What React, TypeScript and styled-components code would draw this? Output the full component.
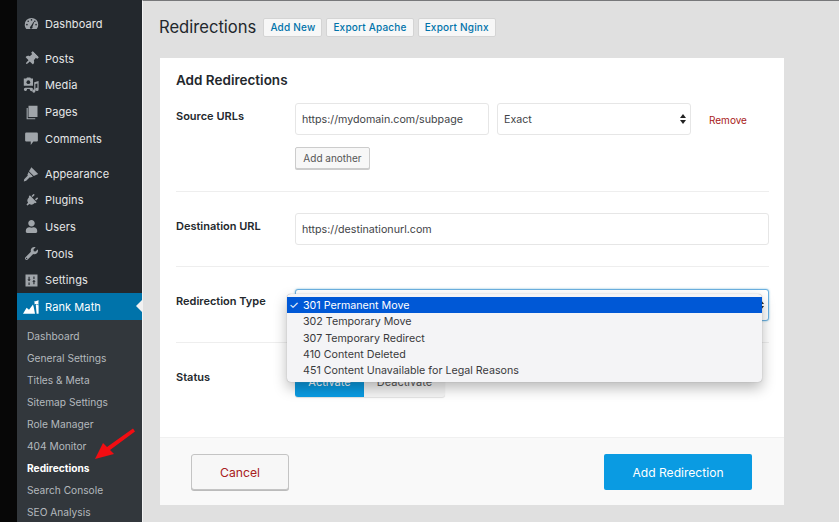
import React from "react";
import styled, { createGlobalStyle } from "styled-components";
import { FaPlug, FaThumbtack, FaUser, FaWrench } from "react-icons/fa";

const GlobalStyle = createGlobalStyle`
  html, body {
    margin: 0;
    padding: 0;
    height: 100%;
    overflow: hidden;
    font-family: Inter, "Liberation Sans", sans-serif;
  }
`;

const DashboardIcon = () => (
  <svg viewBox="0 0 20 20" width="15" height="15" fill="currentColor">
    <path d="M10 2.500a9 9 0 0 0-9 9c0 2.200.8 4.200 2.100 5.700h13.800A8.900 8.900 0 0 0 19 11.500a9 9 0 0 0-9-9z" />
    <g fill="#23282d">
      <circle cx="10" cy="5.200" r="1.100" />
      <circle cx="5.600" cy="7" r="1.100" />
      <circle cx="14.400" cy="7" r="1.100" />
      <circle cx="3.900" cy="11.500" r="1.100" />
      <circle cx="16.100" cy="11.500" r="1.100" />
      <path d="M9 13.500 12.800 7.600l.8.500-2.400 6.200a1.800 1.800 0 1 1-2.200-.8z" />
    </g>
  </svg>
);

const MediaIcon = () => (
  <svg viewBox="0 0 20 20" width="16" height="16" fill="currentColor">
    <path d="M1 2h3l1-1.500h4L10 2h2.500v9H1z" />
    <circle cx="6.700" cy="6.500" r="2.300" fill="#23282d" />
    <path d="M14 6.500 19.500 5v10.500a2 2 0 1 1-1.500-1.900V8l-2.500.7v8.800a2 2 0 1 1-1.500-1.900z" />
    <path d="M3 13.500h7.500a2 2 0 1 1-1.500 3.500 2 2 0 0 1-.5-2H5a2 2 0 1 1-2-1.500z" />
  </svg>
);

const PagesIcon = () => (
  <svg viewBox="0 0 20 20" width="15" height="15" fill="currentColor">
    <path d="M6 1h12v15H6z" />
    <path d="M3.500 4H5v13.500h10V19H3.500z" />
  </svg>
);

const CommentsIcon = () => (
  <svg viewBox="0 0 20 20" width="15" height="15" fill="currentColor">
    <path d="M3 2h14a1.500 1.500 0 0 1 1.500 1.500v9A1.500 1.500 0 0 1 17 14h-4.500L9 18.500V14H3a1.500 1.500 0 0 1-1.500-1.500v-9A1.500 1.500 0 0 1 3 2z" />
  </svg>
);

const AppearanceIcon = () => (
  <svg viewBox="0 0 20 20" width="16" height="16" fill="currentColor">
    <path d="M10.500 1.500 19 10l-5.500 2.500L7.500 6.500z" />
    <path d="M7 7.500 12.500 13l-3 1.500-1-.5L4 18.500 1 19.500 1.500 16.500 6 12l-.5-1z" />
  </svg>
);

const SettingsIcon = () => (
  <svg viewBox="0 0 20 20" width="15" height="15" fill="currentColor">
    <path d="M2 2h16v16H2z" />
    <g fill="#23282d">
      <path d="M6 5h1.500v3.500H9l-2.250 2.500L4.500 8.500H6z" />
      <path d="M6 12.500h1.500V16H6z" />
      <path d="M12.500 11.500H11L13.250 9l2.250 2.500H14V15h-1.500z" />
      <path d="M12.500 4.500H14V8h-1.500z" />
    </g>
  </svg>
);

const RankMathIcon = () => (
  <svg viewBox="0 0 20 20" width="16" height="16" fill="currentColor">
    <path d="M0 18.500 4.500 11l3 2.500L12.500 7l1 3.500L15 18.500z" />
    <path d="M13.500 6.500 15 5l-1.500-1.500L19.500 1.500 19 8l-1.500-1.800L16 7.500l1 11h2.500V6z" />
  </svg>
);

const menuGroups = [
  [{ label: "Dashboard", icon: <DashboardIcon /> }],
  [
    { label: "Posts", icon: <FaThumbtack size={14} style={{ transform: "rotate(45deg)" }} /> },
    { label: "Media", icon: <MediaIcon /> },
    { label: "Pages", icon: <PagesIcon /> },
    { label: "Comments", icon: <CommentsIcon /> },
  ],
  [
    { label: "Appearance", icon: <AppearanceIcon /> },
    { label: "Plugins", icon: <FaPlug size={13} style={{ transform: "rotate(45deg)" }} /> },
    { label: "Users", icon: <FaUser size={13} /> },
    { label: "Tools", icon: <FaWrench size={13} /> },
    { label: "Settings", icon: <SettingsIcon /> },
  ],
];

const subItems = [
  "Dashboard",
  "General Settings",
  "Titles & Meta",
  "Sitemap Settings",
  "Role Manager",
  "404 Monitor",
  "Redirections",
  "Search Console",
  "SEO Analysis",
];

const redirectOptions = [
  "301 Permanent Move",
  "302 Temporary Move",
  "307 Temporary Redirect",
  "410 Content Deleted",
  "451 Content Unavailable for Legal Reasons",
];

export default function App() {
  return (
    <Page>
      <GlobalStyle />
      <Rail />
      <Sidebar>
        {menuGroups.map((group) => (
          <MenuGroup key={group[0].label}>
            {group.map((item) => (
              <MenuItem key={item.label}>
                <IconSlot>{item.icon}</IconSlot>
                {item.label}
              </MenuItem>
            ))}
          </MenuGroup>
        ))}
        <ActiveItem>
          <IconSlot>
            <RankMathIcon />
          </IconSlot>
          Rank Math
        </ActiveItem>
        <SubMenu>
          {subItems.map((item) => (
            <SubItem key={item} $current={item === "Redirections"}>
              {item}
            </SubItem>
          ))}
        </SubMenu>
        <PointerArrow viewBox="0 0 44 34" width="44" height="34">
          <path d="M2 32 10 16l4 4L40 1.500 42 4.500 17 23l4 4z" fill="#f20d12" />
        </PointerArrow>
      </Sidebar>
      <Main>
        <Header>
          <Title>Redirections</Title>
          <HeaderButton>Add New</HeaderButton>
          <HeaderButton>Export Apache</HeaderButton>
          <HeaderButton>Export Nginx</HeaderButton>
        </Header>
        <Card>
          <CardBody>
            <Heading>Add Redirections</Heading>
            <Section $first>
              <Label $low>Source URLs</Label>
              <div>
                <SourceRow>
                  <Field $width="194px">https://mydomain.com/subpage</Field>
                  <Field $width="194px">
                    Exact
                    <SelectArrows />
                  </Field>
                  <RemoveLink>Remove</RemoveLink>
                </SourceRow>
                <AddAnother>Add another</AddAnother>
              </div>
            </Section>
            <Section>
              <Label $low>Destination URL</Label>
              <Field>https://destinationurl.com</Field>
            </Section>
            <Section>
              <Label>Redirection Type</Label>
              <SelectHolder>
                <Field $focused>
                  <SelectArrows />
                </Field>
                <Dropdown>
                  {redirectOptions.map((option, i) => (
                    <DropdownOption key={option} $selected={i === 0}>
                      {i === 0 && <Check>✓</Check>}
                      {option}
                    </DropdownOption>
                  ))}
                </Dropdown>
              </SelectHolder>
            </Section>
            <StatusSection>
              <Label>Status</Label>
              <Toggle>
                <ToggleButton $on>Activate</ToggleButton>
                <ToggleButton>Deactivate</ToggleButton>
              </Toggle>
            </StatusSection>
          </CardBody>
          <Footer>
            <CancelButton>Cancel</CancelButton>
            <SubmitButton>Add Redirection</SubmitButton>
          </Footer>
        </Card>
      </Main>
    </Page>
  );
}

const Page = styled.div`
  display: flex;
  height: 522px;
  width: 839px;
  overflow: hidden;
  background: #e0e0e0;
`;

const Rail = styled.div`
  width: 17px;
  flex-shrink: 0;
  background: #070707;
`;

const Sidebar = styled.nav`
  position: relative;
  width: 125px;
  flex-shrink: 0;
  padding-top: 10px;
  background: #23282d;
  box-sizing: border-box;
`;

const MenuGroup = styled.div`
  & + & {
    margin-top: 8.500px;
  }
`;

const MenuItem = styled.div`
  display: flex;
  align-items: center;
  height: 26.600px;
  padding-top: 1px;
  box-sizing: border-box;
  color: #e6e7e8;
  font-size: 11px;
  letter-spacing: 0.1px;
`;

const IconSlot = styled.span`
  display: flex;
  justify-content: center;
  align-items: center;
  width: 28px;
  color: #a0a5aa;
`;

const ActiveItem = styled(MenuItem)`
  position: relative;
  height: 27px;
  color: #fff;
  background: #0073aa;
  ${IconSlot} {
    color: #fff;
  }
  &::after {
    content: "";
    position: absolute;
    right: 0;
    top: 50%;
    margin-top: -6px;
    border: 6px solid transparent;
    border-left-width: 0;
    border-right-color: #f1f1f1;
  }
`;

const SubMenu = styled.div`
  padding-top: 5.500px;
  height: 202px;
  box-sizing: border-box;
  background: #32373c;
`;

const SubItem = styled.div<{ $current?: boolean }>`
  height: 22px;
  line-height: 22px;
  padding-left: 10px;
  font-size: 10.200px;
  color: ${({ $current }) => ($current ? "#fff" : "#b4b9be")};
  font-weight: ${({ $current }) => ($current ? 700 : 400)};
`;

const PointerArrow = styled.svg`
  position: absolute;
  left: 76px;
  top: 427px;
`;

const Main = styled.main`
  flex: 1;
  min-width: 0;
  border-top: 1px solid #77787a;
  border-left: 1px solid #f2f2f2;
  padding-left: 16px;
  box-sizing: border-box;
`;

const Header = styled.header`
  display: flex;
  align-items: center;
  gap: 4px;
  height: 18px;
  margin-top: 17px;
`;

const Title = styled.h1`
  margin: 0 3px 0 0;
  font-size: 16.600px;
  font-weight: 400;
  color: #23282d;
  white-space: nowrap;
`;

const HeaderButton = styled.button`
  height: 19px;
  padding: 0 6px;
  border: 1px solid #d4d4d4;
  border-radius: 2px;
  background: #f7f7f7;
  color: #0073aa;
  font: 500 10px Inter, "Liberation Sans", sans-serif;
  letter-spacing: 0.2px;
  white-space: nowrap;
`;

const Card = styled.section`
  width: 624px;
  margin: 22px 0 0 1px;
  background: #fff;
`;

const CardBody = styled.div`
  padding: 0 15px 0 16px;
  height: 379px;
  box-sizing: border-box;
`;

const Heading = styled.h2`
  margin: 0 0 14px;
  padding-top: 14px;
  font-size: 13.500px;
  line-height: 17px;
  font-weight: 600;
  color: #23282d;
`;

const Section = styled.div<{ $first?: boolean }>`
  display: grid;
  grid-template-columns: 119px 1fr;
  padding-bottom: ${({ $first }) => ($first ? "22px" : "21px")};
  margin-bottom: ${({ $first }) => ($first ? "21px" : "22px")};
  border-bottom: 1px solid #eeeeee;
`;

const StatusSection = styled(Section)`
  border-bottom: none;
  margin-bottom: 0;
`;

const Label = styled.div<{ $low?: boolean }>`
  padding-top: ${({ $low }) => ($low ? "5px" : "4px")};
  font-size: 11px;
  line-height: 16px;
  font-weight: 600;
  color: #23282d;
`;

const SourceRow = styled.div`
  display: flex;
  align-items: center;
  gap: 8px;
`;

const Field = styled.div<{ $width?: string; $focused?: boolean }>`
  position: relative;
  display: flex;
  align-items: center;
  width: ${({ $width }) => $width || "100%"};
  height: 32px;
  padding: 0 6px;
  border: 1px solid ${({ $focused }) => ($focused ? "#6bb0e0" : "#e6e6e6")};
  border-radius: 3px;
  box-sizing: border-box;
  background: #fff;
  color: #3f4448;
  font-size: 10.700px;
  white-space: nowrap;
  box-shadow: ${({ $focused }) => ($focused ? "0 0 2px rgba(30, 140, 190, 0.6)" : "none")};
`;

const SelectArrows = styled.span`
  position: absolute;
  right: 3px;
  top: 50%;
  margin-top: -5px;
  width: 7px;
  height: 10px;
  &::before,
  &::after {
    content: "";
    position: absolute;
    left: 0;
    border-left: 3px solid transparent;
    border-right: 3px solid transparent;
  }
  &::before {
    top: 0;
    border-bottom: 4px solid #222;
  }
  &::after {
    bottom: 0;
    border-top: 4px solid #222;
  }
`;

const RemoveLink = styled.span`
  margin-left: 10px;
  padding-top: 2px;
  color: #a82020;
  font-size: 10px;
`;

const AddAnother = styled.button`
  display: block;
  height: 22px;
  width: 75px;
  margin-top: 12px;
  padding: 0;
  border: 1px solid #cccccc;
  border-radius: 2px;
  background: #f7f7f7;
  box-shadow: 0 1px 0 #ccc;
  color: #555;
  font: 400 10px Inter, "Liberation Sans", sans-serif;
`;

const SelectHolder = styled.div`
  position: relative;
`;

const Dropdown = styled.div`
  position: absolute;
  top: 5px;
  left: -8px;
  right: 7px;
  padding: 3px 0 4px;
  border-radius: 4px;
  background: #f4f4f6;
  box-shadow: 0 0 1px #8a8a8a, 0 6px 14px rgba(0, 0, 0, 0.28);
  z-index: 2;
`;

const DropdownOption = styled.div<{ $selected?: boolean }>`
  position: relative;
  height: 16.300px;
  line-height: 17.500px;
  padding-left: 16px;
  font-size: 10.700px;
  color: ${({ $selected }) => ($selected ? "#fff" : "#3a3a3c")};
  background: ${({ $selected }) => ($selected ? "#0058d6" : "transparent")};
`;

const Check = styled.span`
  position: absolute;
  left: 2px;
  font-size: 11px;
`;

const Toggle = styled.div`
  display: flex;
`;

const ToggleButton = styled.div<{ $on?: boolean }>`
  display: flex;
  align-items: center;
  justify-content: center;
  height: 32px;
  width: ${({ $on }) => ($on ? "69px" : "81px")};
  padding-top: 1px;
  box-sizing: border-box;
  border-radius: ${({ $on }) => ($on ? "3px 0 0 3px" : "0 3px 3px 0")};
  background: ${({ $on }) => ($on ? "#0a9be2" : "#f5f5f5")};
  color: ${({ $on }) => ($on ? "#fff" : "#555")};
  box-shadow: 0 1px 1px rgba(0, 0, 0, 0.12);
  font-size: 11px;
`;

const Footer = styled.footer`
  display: flex;
  justify-content: space-between;
  align-items: flex-start;
  height: 68px;
  padding: 16px 32px 0 31px;
  box-sizing: border-box;
  background: #f9f9f9;
  border-top: 1px solid #f0f0f0;
`;

const CancelButton = styled.button`
  width: 98px;
  height: 36px;
  border: 1px solid #c4c4c4;
  border-radius: 3px;
  background: #f7f7f7;
  box-shadow: 0 1px 0 #bbb;
  color: #a82020;
  font: 400 12.200px Inter, "Liberation Sans", sans-serif;
`;

const SubmitButton = styled.button`
  width: 148px;
  height: 36px;
  border: none;
  border-radius: 2px;
  background: #0a9be2;
  color: #fff;
  font: 400 12.100px Inter, "Liberation Sans", sans-serif;
`;
